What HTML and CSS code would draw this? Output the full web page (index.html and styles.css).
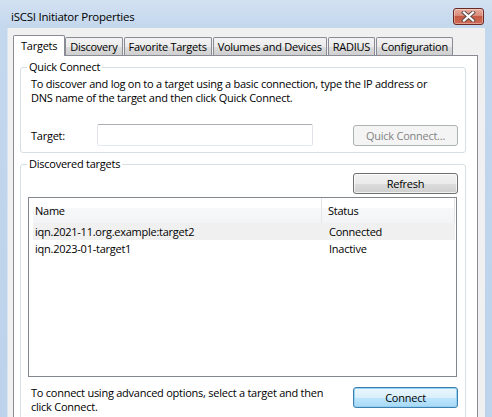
FILE: index.html
```html
<!DOCTYPE html>
<html>
<head>
<meta charset="utf-8">
<link rel="stylesheet" href="styles.css">
</head>
<body>
<div class="window">
  <div class="titlebar">
    <span class="title">iSCSI Initiator Properties</span>
    <button class="close" aria-label="Close">
      <svg width="17" height="11" viewBox="0 0 17 11">
        <path d="M4 1.5 L13 9.5 M13 1.5 L4 9.5" stroke="#5a4a48" stroke-width="4" stroke-linecap="square" fill="none"/>
        <path d="M4 1.5 L13 9.5 M13 1.5 L4 9.5" stroke="#ffffff" stroke-width="2.2" stroke-linecap="square" fill="none"/>
      </svg>
    </button>
  </div>
  <div class="client">
    <div class="tabs">
      <div class="tab active">Targets</div>
      <div class="tab">Discovery</div>
      <div class="tab">Favorite Targets</div>
      <div class="tab">Volumes and Devices</div>
      <div class="tab">RADIUS</div>
      <div class="tab">Configuration</div>
    </div>
    <div class="panel">
      <fieldset class="group quick">
        <legend>Quick Connect</legend>
        <p class="desc">To discover and log on to a target using a basic connection, type the IP address or<br>DNS name of the target and then click Quick Connect.</p>
        <div class="target-row">
          <label class="target-label" for="target">Target:</label>
          <input class="textbox" id="target" type="text">
          <button class="btn disabled">Quick Connect...</button>
        </div>
      </fieldset>
      <fieldset class="group discovered">
        <legend>Discovered targets</legend>
        <div class="refresh-row"><button class="btn">Refresh</button></div>
        <div class="listview">
          <div class="lv-header">
            <div class="col col-name">Name</div>
            <div class="col col-status">Status</div>
          </div>
          <div class="lv-row hot">
            <div class="cell col-name">iqn.2021-11.org.example:target2</div>
            <div class="cell col-status">Connected</div>
          </div>
          <div class="lv-row">
            <div class="cell col-name">iqn.2023-01-target1</div>
            <div class="cell col-status">Inactive</div>
          </div>
        </div>
        <div class="bottom-row">
          <p class="hint">To connect using advanced options, select a target and then<br>click Connect.</p>
          <button class="btn default">Connect</button>
        </div>
      </fieldset>
    </div>
  </div>
</div>
</body>
</html>
```
FILE: styles.css
```css
* { box-sizing: border-box; }
html, body { margin: 0; padding: 0; }
body {
  background: #bcd3eb;
  font-family: "Open Sans", "Noto Sans", sans-serif;
  font-size: 11px;
  letter-spacing: -0.25px;
  color: #000;
}
.window {
  width: 492px;
  height: 417px;
  overflow: hidden;
  display: flex;
  flex-direction: column;
  background: linear-gradient(to bottom, #d3e1f1 0px, #c3d7ed 28px, #bcd3eb 100%);
}
.titlebar {
  height: 28px;
  flex: none;
  display: flex;
  align-items: flex-start;
  justify-content: space-between;
}
.title {
  margin: 10px 0 0 11px;
  line-height: 14px;
  font-size: 11.5px;
}
.close {
  margin: 8px 8px 0 0;
  width: 31px;
  height: 17px;
  padding: 0;
  border: 1px solid #6a2a22;
  border-radius: 3px;
  background: linear-gradient(to bottom, #e9ad9f 0%, #d98a78 45%, #c65a44 50%, #cf6a53 100%);
  box-shadow: inset 0 0 0 1px rgba(255, 255, 255, 0.35);
  display: flex;
  align-items: center;
  justify-content: center;
}
.close svg { display: block; }
.client {
  flex: 1;
  margin: 0 7px 0 8px;
  background: #f0f0f0;
  padding: 7px 7px 0 5px;
  box-shadow: -1px 0 0 #d8e4f1;
}
.tabs {
  height: 20px;
  display: flex;
  align-items: flex-end;
}
.tab {
  height: 18px;
  padding: 0 4px;
  margin-left: 1px;
  border: 1px solid #898c95;
  border-bottom: none;
  border-radius: 2px 2px 0 0;
  background: linear-gradient(to bottom, #f3f3f3 0%, #ebebeb 50%, #dddddd 51%, #cfcfcf 100%);
  display: flex;
  align-items: center;
  white-space: nowrap;
}
.tab.active {
  height: 21px;
  margin-left: 0;
  margin-bottom: -1px;
  padding: 0 7px 2px 7px;
  background: #fff;
  position: relative;
  z-index: 1;
}
.tab.active + .tab { margin-left: 0; }
.panel {
  background: #fff;
  border: 1px solid #898c95;
  height: 400px;
}
.group {
  margin: 0 11px 0 6px;
  padding: 0 7px 6px 6px;
  border: 1px solid #d5dfe5;
  border-radius: 3px;
  min-width: 0;
}
.group legend {
  padding: 0 2px;
  line-height: 14px;
}
.quick { margin-top: 4px; }
.desc {
  margin: 3px 0 0 4px;
  line-height: 14px;
  white-space: nowrap;
}
.target-row {
  margin-top: 19px;
  height: 22px;
  display: flex;
  align-items: center;
}
.target-label {
  width: 66px;
  margin-left: 4px;
  flex: none;
}
.textbox {
  width: 216px;
  height: 22px;
  border: 1px solid #e2e3ea;
  border-top-color: #abadb3;
  border-bottom-color: #e3e9ef;
  border-radius: 2px;
  background: #fff;
  font: inherit;
  padding: 0 3px;
}
.btn {
  margin-left: auto;
  width: 105px;
  height: 21px;
  padding: 0;
  font: inherit;
  letter-spacing: inherit;
  color: #000;
  border: 1px solid #707070;
  border-radius: 3px;
  background: linear-gradient(to bottom, #f2f2f2 0%, #ebebeb 50%, #dddddd 51%, #cfcfcf 100%);
  box-shadow: inset 0 0 0 1px rgba(255, 255, 255, 0.7);
}
.btn.disabled {
  color: #838383;
  border-color: #adb2b5;
  background: #f4f4f4;
  box-shadow: none;
}
.btn.default {
  border-color: #3c7fb1;
  background: linear-gradient(to bottom, #eaf6fd 0%, #d9f0fc 50%, #bee6fd 51%, #a7d9f5 100%);
  box-shadow: inset 0 0 0 1px #98d1ef;
}
.discovered {
  margin-top: 4px;
  padding-bottom: 20px;
}
.refresh-row {
  margin-top: 2px;
  display: flex;
}
.listview {
  margin: 3px 1px 0 1px;
  height: 180px;
  border: 1px solid #828790;
  background: #fff;
  padding: 0 1px 0 4px;
}
.lv-header {
  height: 25px;
  display: flex;
  background: linear-gradient(to bottom, #ffffff 0%, #ffffff 40%, #f7f8f9 41%, #f3f4f6 100%);
}
.col {
  display: flex;
  align-items: center;
  border-right: 1px solid #e3e5e9;
}
.col-name { width: 289px; padding-left: 2px; }
.col-status { width: 133px; padding-left: 6px; }
.lv-row {
  height: 17px;
  display: flex;
  align-items: center;
}
.lv-row.hot { background: #f0f0f0; }
.cell { white-space: nowrap; }
.lv-row .col-status { padding-left: 7px; }
.bottom-row {
  margin-top: 10px;
  display: flex;
  align-items: flex-start;
}
.hint {
  margin: -1px 0 0 4px;
  line-height: 13.5px;
  white-space: nowrap;
}
```
